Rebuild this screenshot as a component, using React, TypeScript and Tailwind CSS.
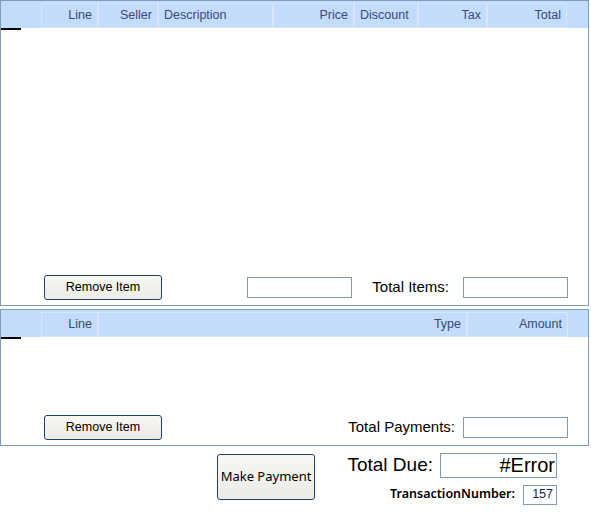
import React from "react";

const arial = { fontFamily: '"Liberation Sans", Arial, sans-serif' };

function HeaderCell({ w, label, align = "right", grow = false }: { w?: number; label?: string; align?: "left" | "right"; grow?: boolean }) {
  return (
    <div
      className={`h-full border border-[#d7e6fc] flex items-center px-[5px] pb-[1px] text-[12.5px] text-[#3a4877] ${grow ? "flex-1" : ""} ${align === "right" ? "justify-end" : "justify-start"}`}
      style={grow ? undefined : { width: w }}
    >
      {label}
    </div>
  );
}

function Btn({ children }: { children: React.ReactNode }) {
  return (
    <button className="w-[118px] h-[25px] rounded-[3px] border border-[#1d416f] bg-gradient-to-b from-[#f7f7f3] to-[#ecebe5] text-[12.5px] text-black flex items-center justify-center">
      {children}
    </button>
  );
}

function Box({ className = "", children }: { className?: string; children?: React.ReactNode }) {
  return <div className={`border border-[#7f9db9] bg-white ${className}`}>{children}</div>;
}

export default function App() {
  return (
    <div className="w-[591px] h-[517px] bg-white relative overflow-hidden" style={arial}>
      {/* Panel 1 */}
      <div className="w-[589px] h-[306px] border border-[#7f9db9] flex flex-col">
        <div className="h-[27px] bg-[#c4dcfc] flex pt-[2px]">
          <div className="w-[40px]" />
          <HeaderCell w={57} label="Line" />
          <HeaderCell w={60} label="Seller" />
          <HeaderCell w={115} label="Description" align="left" />
          <HeaderCell w={81} label="Price" />
          <HeaderCell w={64} label="Discount" align="left" />
          <HeaderCell w={69} label="Tax" />
          <HeaderCell w={80} label="Total" />
        </div>
        <div className="w-[20px] h-[2px] bg-black" />
        <div className="flex-1" />
        <div className="flex items-center pb-[5px] h-[31px]">
          <div className="ml-[43px]">
            <Btn>Remove Item</Btn>
          </div>
          <Box className="ml-[85px] w-[105px] h-[21px]" />
          <div className="ml-auto mr-[14px] text-[15px] text-black">Total Items:</div>
          <Box className="mr-[20px] w-[105px] h-[21px]" />
        </div>
      </div>

      {/* Panel 2 */}
      <div className="mt-[3px] w-[589px] h-[137px] border border-[#7f9db9] flex flex-col">
        <div className="h-[27px] bg-[#c4dcfc] flex pt-[2px]">
          <div className="w-[40px]" />
          <HeaderCell w={57} label="Line" />
          <HeaderCell grow label="Type" />
          <HeaderCell w={101} label="Amount" />
          <div className="w-[20px]" />
        </div>
        <div className="w-[20px] h-[2px] bg-black" />
        <div className="flex-1" />
        <div className="flex items-center pb-[5px] h-[31px]">
          <div className="ml-[43px]">
            <Btn>Remove Item</Btn>
          </div>
          <div className="ml-auto mr-[8px] text-[15px] text-black">Total Payments:</div>
          <Box className="mr-[20px] w-[105px] h-[21px]" />
        </div>
      </div>

      {/* Bottom */}
      <div className="flex">
        <button
          className="ml-[217px] mt-[8px] w-[98px] h-[46px] rounded-[3px] border border-[#1d416f] bg-gradient-to-b from-[#f7f7f3] to-[#ecebe5] text-[13px] text-black flex items-center justify-center pb-[1px]"
          style={{ fontFamily: '"Noto Sans", sans-serif' }}
        >
          Make Payment
        </button>
        <div className="ml-auto mr-[34px] flex flex-col items-end">
          <div className="mt-[5px] flex items-center">
            <div className="text-[19px] text-black mr-[7px]">Total Due:</div>
            <Box className="w-[117px] h-[25px] flex items-center justify-end pr-[1px] text-[20px] text-black">#Error</Box>
          </div>
          <div className="mt-[5px] flex items-center">
            <div className="text-[12.5px] font-semibold text-black mr-[8px]" style={{ fontFamily: '"Noto Sans", sans-serif' }}>
              TransactionNumber:
            </div>
            <Box className="w-[34px] h-[20px] flex items-center justify-end pr-[3px] text-[12.5px] text-[#1c1c5a]">157</Box>
          </div>
        </div>
      </div>
    </div>
  );
}
